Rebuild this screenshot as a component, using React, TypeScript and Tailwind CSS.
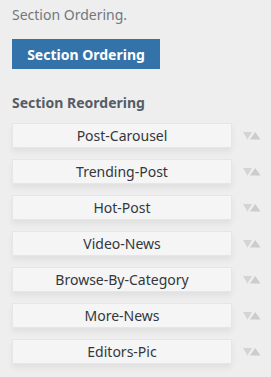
import React from "react";

const items = [
  "Post-Carousel",
  "Trending-Post",
  "Hot-Post",
  "Video-News",
  "Browse-By-Category",
  "More-News",
  "Editors-Pic",
];

function Arrows() {
  return (
    <svg width="18" height="8" viewBox="0 0 18 8" className="shrink-0">
      <polygon points="0,0 9,0 4.5,7.5" fill="#d4d4d4" />
      <polygon points="7,7.5 17.5,7.5 12.25,0" fill="#cccccc" />
    </svg>
  );
}

export default function App() {
  return (
    <div
      className="w-[271px] h-[377px] bg-[#eeeeee] pl-3 pt-[5px] text-[#555d66]"
      style={{ fontFamily: '"Noto Sans", "Open Sans", sans-serif' }}
    >
      <div className="text-[14px] leading-[19px] text-[#72777c]">Section Ordering.</div>
      <div className="mt-[15px] w-[148px] h-[30px] bg-[#3473aa] flex items-center justify-center text-white text-[14px] font-bold">
        Section Ordering
      </div>
      <div className="mt-[24px] text-[14px] font-bold leading-[19px] text-[#555d66]">Section Reordering</div>
      <div className="mt-[11px] flex flex-col gap-[11px]">
        {items.map((it) => (
          <div key={it} className="flex items-center">
            <div className="w-[220px] h-[25px] bg-[#f5f5f5] border border-[#e6e6e6] shadow-[0_4px_6px_rgba(0,0,0,0.06)] flex items-center justify-center text-[14px] text-[#32373c]">
              {it}
            </div>
            <div className="ml-[11px]">
              <Arrows />
            </div>
          </div>
        ))}
      </div>
    </div>
  );
}
